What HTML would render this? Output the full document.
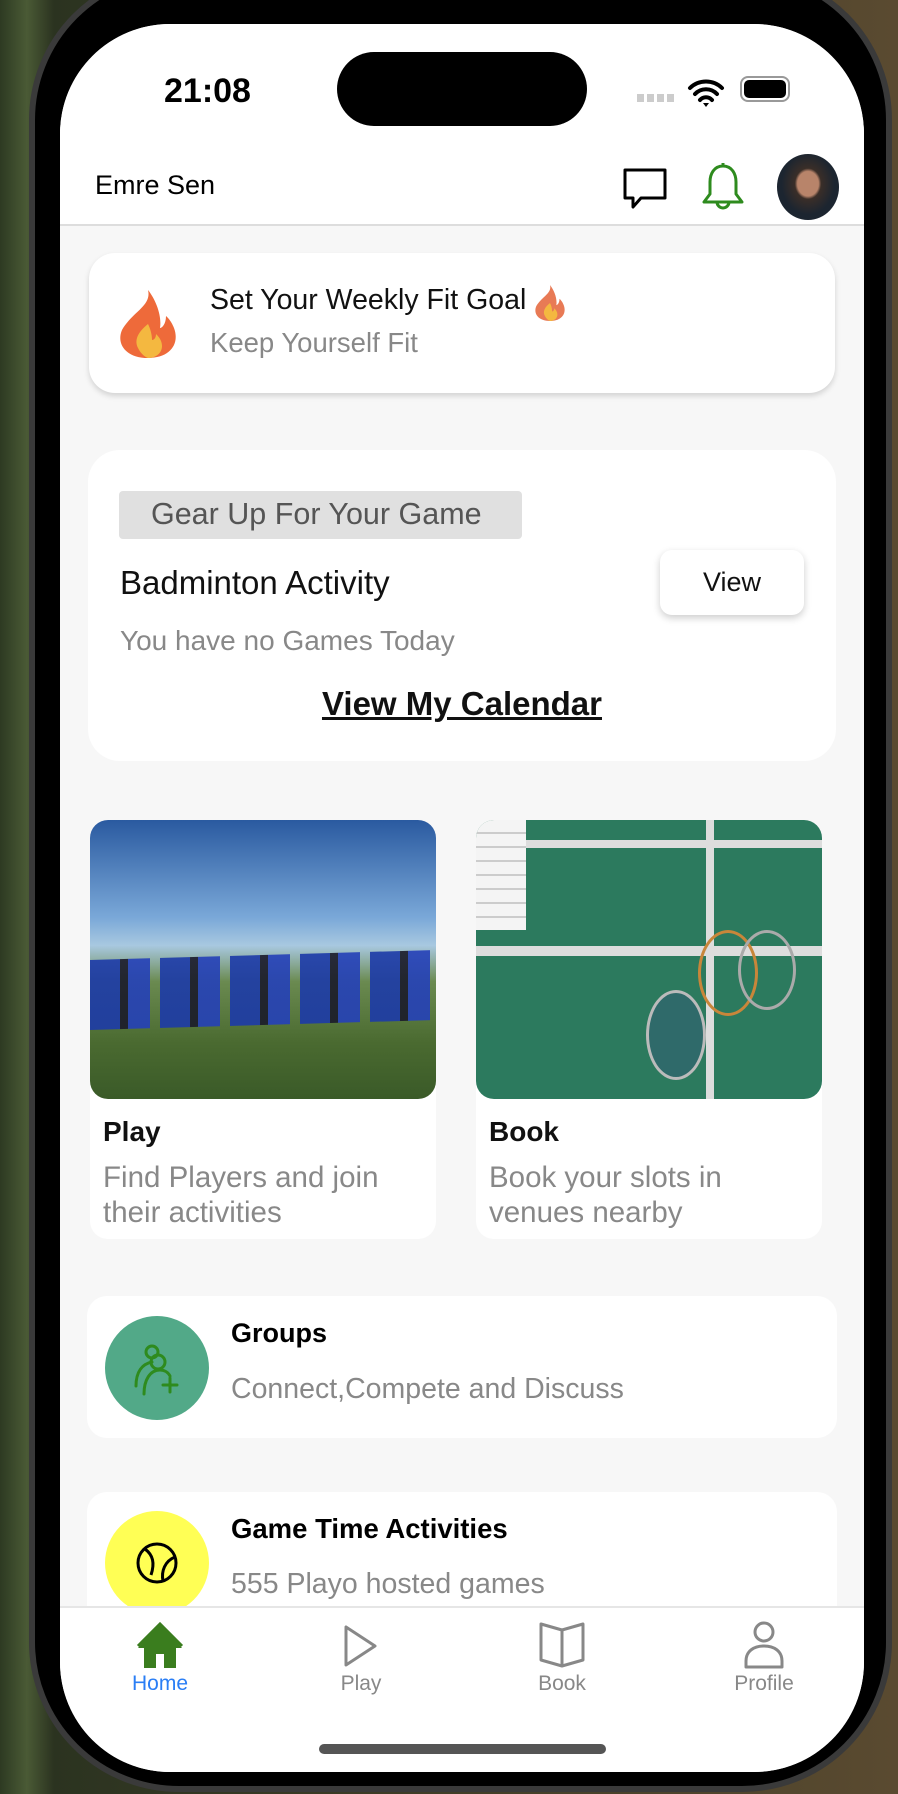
<!DOCTYPE html>
<html><head><meta charset="utf-8"><style>
*{margin:0;padding:0;box-sizing:border-box}
body{width:898px;height:1794px;overflow:hidden;position:relative;font-family:"Liberation Sans",sans-serif;background:linear-gradient(90deg,#2d3a22 0%,#4a5a35 3%,#2b3320 6%,#5a4a30 100%)}
.abs{position:absolute}
.phone{left:29px;top:-30px;width:863px;height:1822px;border-radius:150px;background:#000;border:6px solid #3a3a3a}
.screen{left:60px;top:24px;width:804px;height:1748px;border-radius:110px;background:#f7f7f7;overflow:hidden}
.t{position:absolute;white-space:nowrap}
.card{position:absolute;background:#fff}
</style></head><body>
<div class="abs phone"></div>
<div class="abs screen">
  <div class="abs" style="left:0;top:0;width:804px;height:202px;background:#fff;border-bottom:2px solid #ddd"></div>
  <div class="t" style="left:104px;top:48px;font-size:34px;font-weight:bold;color:#000">21:08</div>
  <div class="abs" style="left:277px;top:28px;width:250px;height:74px;border-radius:37px;background:#000"></div>
  <div class="abs" style="left:577px;top:70px;width:40px;height:8px;background:repeating-linear-gradient(90deg,#ccc 0 7px,transparent 7px 10px)"></div>
  <svg class="abs" style="left:627px;top:54px" width="38" height="30" viewBox="0 0 38 30"><path d="M3 10a23 23 0 0 1 32 0M8 16a15 15 0 0 1 22 0M13 22a8 8 0 0 1 12 0" stroke="#000" stroke-width="4" fill="none" stroke-linecap="round"/><path d="M16 25l3 4 3-4z" fill="#000"/></svg>
  <div class="abs" style="left:680px;top:52px;width:50px;height:26px;border:2px solid #999;border-radius:8px;padding:2px"><div style="width:100%;height:100%;background:#000;border-radius:5px"></div></div>
  <div class="t" style="left:35px;top:146px;font-size:27px;color:#000">Emre Sen</div>
  <svg class="abs" style="left:561px;top:142px" width="48" height="48" viewBox="0 0 48 48"><path d="M4 4h40v28H20l-8 9v-9H4z" fill="none" stroke="#000" stroke-width="3" stroke-linejoin="round"/></svg>
  <svg class="abs" style="left:641px;top:138px" width="44" height="54" viewBox="0 0 44 54"><path d="M22 4c-9 0-13 8-13 16v12l-6 8h38l-6-8V20c0-8-4-16-13-16zM16 40a6 6 0 0 0 12 0M22 4V1" fill="none" stroke="#2e8b1e" stroke-width="3" stroke-linejoin="round"/></svg>
  <div class="abs" style="left:717px;top:130px;width:62px;height:66px;border-radius:50%;background:radial-gradient(ellipse at 50% 45%,#b8846a 0 24%,#3a2e28 30%,#1c2530 60%)"></div>

  <div class="card" style="left:29px;top:229px;width:746px;height:140px;border-radius:26px;box-shadow:0 3px 6px rgba(0,0,0,.15)"></div>
  <svg class="abs" style="left:58px;top:264px" width="60" height="72" viewBox="0 0 60 72"><path d="M30 2C34 18 14 24 4 42c-6 14 4 28 26 28s32-14 26-30c-3-8-8-12-8-12 0 8-4 12-6 12C44 28 38 12 30 2z" fill="#ee6a3a"/><path d="M30 36c-10 8-14 16-10 24 3 6 7 9 10 10 8 0 14-5 14-12 0-6-4-10-6-12 0 4-2 6-4 6 0-6-2-12-4-16z" fill="#f4b840"/></svg>
  <div class="t" style="left:150px;top:260px;font-size:28.5px;color:#111">Set Your Weekly Fit Goal</div>
  <svg class="abs" style="left:474px;top:260px" width="32" height="38" viewBox="0 0 60 72"><path d="M30 2C34 18 14 24 4 42c-6 14 4 28 26 28s32-14 26-30c-3-8-8-12-8-12 0 8-4 12-6 12C44 28 38 12 30 2z" fill="#e87a55"/><path d="M30 36c-10 8-14 16-10 24 3 6 7 9 10 10 8 0 14-5 14-12 0-6-4-10-6-12 0 4-2 6-4 6 0-6-2-12-4-16z" fill="#f4b840"/></svg>
  <div class="t" style="left:150px;top:303px;font-size:27.5px;color:#888">Keep Yourself Fit</div>

  <div class="card" style="left:28px;top:426px;width:748px;height:311px;border-radius:32px"></div>
  <div class="abs" style="left:59px;top:467px;width:403px;height:48px;background:#e0e0e0;border-radius:4px"></div>
  <div class="t" style="left:91px;top:473px;font-size:30.5px;color:#555">Gear Up For Your Game</div>
  <div class="t" style="left:60px;top:540px;font-size:33px;color:#111">Badminton Activity</div>
  <div class="abs" style="left:600px;top:526px;width:144px;height:65px;border-radius:12px;background:#fff;box-shadow:0 3px 8px rgba(0,0,0,.2)"></div>
  <div class="t" style="left:600px;top:543px;width:144px;text-align:center;font-size:27px;color:#111">View</div>
  <div class="t" style="left:60px;top:601px;font-size:28px;color:#888">You have no Games Today</div>
  <div class="t" style="left:0;top:661px;width:804px;text-align:center;font-size:33px;font-weight:bold;text-decoration:underline;color:#111">View My Calendar</div>

  <div class="card" style="left:30px;top:796px;width:346px;height:419px;border-radius:18px"></div>
  <div class="abs" style="left:30px;top:796px;width:346px;height:279px;border-radius:18px;overflow:hidden;background:linear-gradient(180deg,#2a5aa0 0%,#7aa8d8 35%,#a8c8e0 45%,#6a8a50 58%,#4a6a30 80%,#3a5a28 100%)">
    <div class="abs" style="left:0;top:110px;width:346px;height:100px;background:repeating-linear-gradient(90deg,#1c3aa8 0 30px,#1a1a2a 30px 38px,#2440b8 38px 60px,transparent 60px 70px);opacity:.9;clip-path:polygon(0 30%,100% 20%,100% 90%,0 100%)"></div>
  </div>
  <div class="t" style="left:43px;top:1092px;font-size:28px;font-weight:bold;color:#111">Play</div>
  <div class="t" style="left:43px;top:1136px;font-size:29.5px;color:#888;line-height:35px">Find Players and join<br>their activities</div>

  <div class="card" style="left:416px;top:796px;width:346px;height:419px;border-radius:18px"></div>
  <div class="abs" style="left:416px;top:796px;width:346px;height:279px;border-radius:18px;overflow:hidden;background:#2c7a5e">
    <div class="abs" style="left:0;top:20px;width:346px;height:8px;background:#ddd"></div>
    <div class="abs" style="left:0;top:126px;width:346px;height:10px;background:#ddd"></div>
    <div class="abs" style="left:230px;top:0;width:8px;height:279px;background:#ddd"></div>
    <div class="abs" style="left:0;top:0;width:50px;height:110px;background:repeating-linear-gradient(180deg,#f4f4f4 0 12px,#ccc 12px 14px)"></div>
    <div class="abs" style="left:170px;top:170px;width:60px;height:90px;border:3px solid #bbb;border-radius:50%;background:#2f6a6a"></div>
    <div class="abs" style="left:222px;top:110px;width:60px;height:86px;border:3px solid #c8863a;border-radius:50%"></div>
    <div class="abs" style="left:262px;top:110px;width:58px;height:80px;border:3px solid #aaa;border-radius:50%"></div>
  </div>
  <div class="t" style="left:429px;top:1092px;font-size:28px;font-weight:bold;color:#111">Book</div>
  <div class="t" style="left:429px;top:1136px;font-size:29.5px;color:#888;line-height:35px">Book your slots in<br>venues nearby</div>

  <div class="card" style="left:27px;top:1272px;width:750px;height:142px;border-radius:20px"></div>
  <div class="abs" style="left:45px;top:1292px;width:104px;height:104px;border-radius:50%;background:#52a988"></div>
  <svg class="abs" style="left:72px;top:1318px" width="50" height="54" viewBox="0 0 50 54"><g fill="none" stroke="#2e8b1e" stroke-width="3" stroke-linecap="round"><circle cx="20" cy="10" r="6"/><circle cx="26" cy="20" r="7"/><path d="M4 44c0-14 6-22 16-24M12 52c0-14 6-24 16-24 4 0 8 2 10 6M38 36v14M31 43h14"/></g></svg>
  <div class="t" style="left:171px;top:1294px;font-size:27px;font-weight:bold;color:#000">Groups</div>
  <div class="t" style="left:171px;top:1349px;font-size:28.5px;color:#888">Connect,Compete and Discuss</div>

  <div class="card" style="left:27px;top:1468px;width:750px;height:160px;border-radius:20px"></div>
  <div class="abs" style="left:45px;top:1487px;width:104px;height:104px;border-radius:50%;background:#ffff55"></div>
  <svg class="abs" style="left:75px;top:1517px" width="44" height="44" viewBox="0 0 44 44"><g fill="none" stroke="#000" stroke-width="3"><circle cx="22" cy="22" r="19"/><path d="M10 8c8 6 10 14 6 26M28 40c-2-10 2-20 12-24"/></g></svg>
  <div class="t" style="left:171px;top:1489px;font-size:27.5px;font-weight:bold;color:#000">Game Time Activities</div>
  <div class="t" style="left:171px;top:1544px;font-size:28.5px;color:#888">555 Playo hosted games</div>

  <div class="abs" style="left:0;top:1582px;width:804px;height:170px;background:#fff;border-top:2px solid #e6e6e6"></div>
  <svg class="abs" style="left:76px;top:1598px" width="48" height="46" viewBox="0 0 48 46"><path d="M24 2L2 26h6v20h12V32h8v14h12V26h6z" fill="#3a7d1e"/><path d="M2 24L24 2l22 22" stroke="#3a7d1e" stroke-width="3" fill="none"/></svg>
  <div class="t" style="left:60px;top:1648px;width:80px;text-align:center;font-size:21px;color:#2a7ef5">Home</div>
  <svg class="abs" style="left:282px;top:1600px" width="36" height="44" viewBox="0 0 36 44"><path d="M4 3v38l29-19z" fill="none" stroke="#888" stroke-width="3" stroke-linejoin="round"/></svg>
  <div class="t" style="left:261px;top:1648px;width:80px;text-align:center;font-size:21px;color:#888">Play</div>
  <svg class="abs" style="left:478px;top:1597px" width="48" height="48" viewBox="0 0 48 48"><path d="M3 3l21 6 21-6v36l-21 6-21-6zM24 9v36" fill="none" stroke="#888" stroke-width="3" stroke-linejoin="round"/></svg>
  <div class="t" style="left:462px;top:1648px;width:80px;text-align:center;font-size:21px;color:#888">Book</div>
  <svg class="abs" style="left:683px;top:1596px" width="42" height="50" viewBox="0 0 42 50"><circle cx="21" cy="12" r="9" fill="none" stroke="#888" stroke-width="3"/><path d="M3 47v-6c0-10 8-15 18-15s18 5 18 15v6z" fill="none" stroke="#888" stroke-width="3" stroke-linejoin="round"/></svg>
  <div class="t" style="left:664px;top:1648px;width:80px;text-align:center;font-size:21px;color:#888">Profile</div>
  <div class="abs" style="left:259px;top:1720px;width:287px;height:10px;border-radius:5px;background:#555"></div>
</div>
</body></html>
